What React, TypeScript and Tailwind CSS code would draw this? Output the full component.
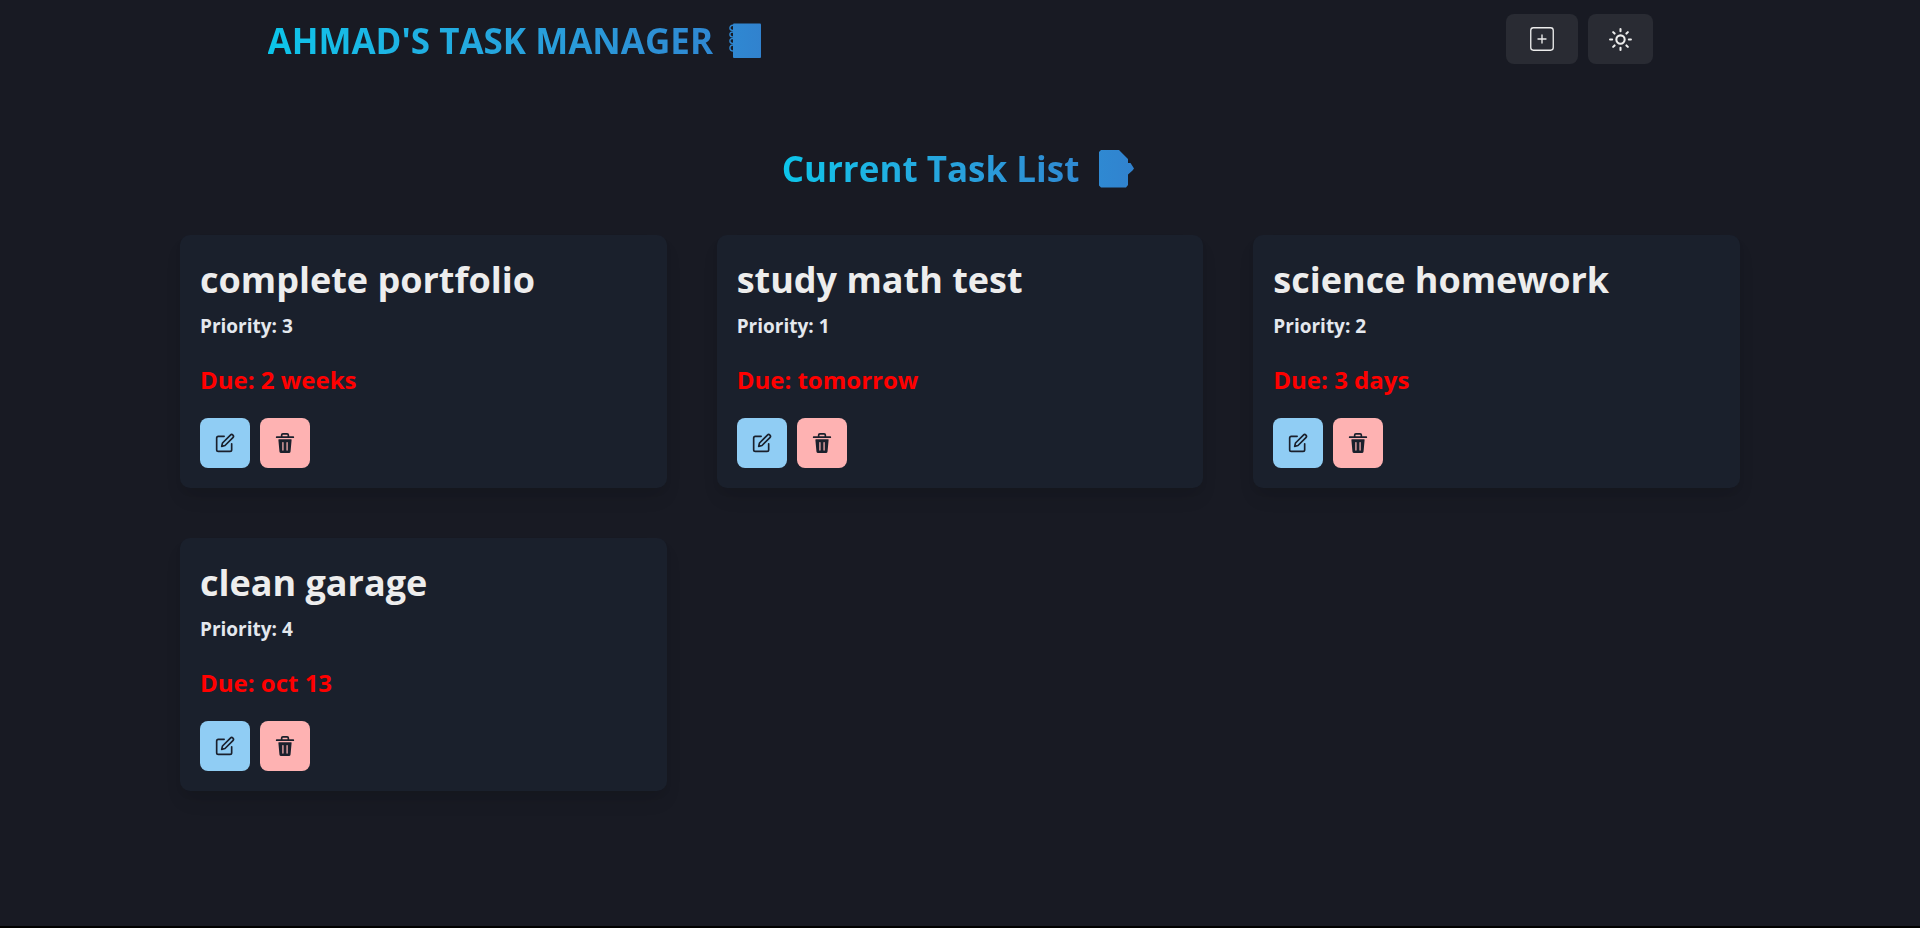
import { useState } from "react";
import { CiSquarePlus } from "react-icons/ci";
import { FiEdit } from "react-icons/fi";
import { LuSun } from "react-icons/lu";

type Task = { id: number; title: string; priority: number; due: string };

const initialTasks: Task[] = [
  { id: 1, title: "complete portfolio", priority: 3, due: "2 weeks" },
  { id: 2, title: "study math test", priority: 1, due: "tomorrow" },
  { id: 3, title: "science homework", priority: 2, due: "3 days" },
  { id: 4, title: "clean garage", priority: 4, due: "oct 13" },
];

function NotebookIcon() {
  return (
    <svg width="33" height="36" viewBox="0 0 33 36" aria-hidden="true">
      <defs>
        <linearGradient id="notebook-fill" x1="0" x2="1">
          <stop offset="0" stopColor="#2f88d2" />
          <stop offset="1" stopColor="#3182ce" />
        </linearGradient>
      </defs>
      <rect x="4" y="0.500" width="28" height="34.500" rx="1" fill="url(#notebook-fill)" />
      <g fill="none" stroke="#2f88d2" strokeWidth="1.400">
        <path d="M4.500 2.300C2 2 .9 3.500.9 5S2 7.500 4.500 7.500" />
        <path d="M4.500 9C2 8.700.9 10 .9 11.500S2 14 4.500 14" />
        <path d="M4.500 15.500C2 15.200.9 16.500.9 18S2 20.500 4.500 20.500" />
        <path d="M4.500 22C2 21.700.9 23.300.9 25S2 28 4.500 28" />
      </g>
    </svg>
  );
}

function MemoIcon() {
  return (
    <svg width="35" height="38" viewBox="0 0 35 38" aria-hidden="true">
      <defs>
        <linearGradient id="memo-fill" x1="0" x2="1">
          <stop offset="0" stopColor="#2f89d2" />
          <stop offset="1" stopColor="#3182ce" />
        </linearGradient>
      </defs>
      <path
        fill="url(#memo-fill)"
        d="M2 0H20L29 9V13H31.500L35 18.500L33.500 20.500L29 24.500V35L27 37.500H2L0 35.500V2Z"
      />
    </svg>
  );
}

function TrashIcon() {
  return (
    <svg width="20" height="20" viewBox="0 0 24 24" fill="currentColor" aria-hidden="true">
      <path d="M19.452 7.5H4.547a.5.5 0 00-.5.545l1.287 14.136A2 2 0 007.326 24h9.347a2 2 0 001.992-1.819L19.95 8.045a.5.5 0 00-.129-.382.5.5 0 00-.369-.163zm-9.2 13a.75.75 0 01-1.5 0v-9a.75.75 0 011.5 0zm5 0a.75.75 0 01-1.5 0v-9a.75.75 0 011.5 0zM22 4h-4.75a.25.25 0 01-.25-.25V2.5A2.5 2.5 0 0014.5 0h-5A2.5 2.5 0 007 2.5v1.25a.25.25 0 01-.25.25H2a1 1 0 000 2h20a1 1 0 000-2zM9 3.75V2.5a.5.5 0 01.5-.5h5a.5.5 0 01.5.5v1.25a.25.25 0 01-.25.25h-5.5A.25.25 0 019 3.75z" />
    </svg>
  );
}

function TaskCard({ task, onDelete }: { task: Task; onDelete: () => void }) {
  return (
    <article className="rounded-[10px] bg-[#1a202c] p-5 shadow-[0_12px_19px_-4px_rgba(0,0,0,0.1),0_5px_8px_-2px_rgba(0,0,0,0.05)]">
      <h2 className="text-4xl leading-[50px] font-bold text-[#ededed]">{task.title}</h2>
      <p className="mt-[6px] text-[19px] leading-[30px] font-bold text-[#e4e8ee]">
        Priority: {task.priority}
      </p>
      <p className="mt-5 text-2xl leading-[38px] font-bold text-[#ff0000]">Due: {task.due}</p>
      <div className="mt-[19px] flex gap-[10px] text-[#1a202c]">
        <button
          type="button"
          aria-label={`Edit ${task.title}`}
          className="flex size-[50px] items-center justify-center rounded-lg bg-[#90cdf4]"
        >
          <FiEdit size={20} />
        </button>
        <button
          type="button"
          aria-label={`Delete ${task.title}`}
          onClick={onDelete}
          className="flex size-[50px] items-center justify-center rounded-lg bg-[#feb2b2]"
        >
          <TrashIcon />
        </button>
      </div>
    </article>
  );
}

export default function App() {
  const [tasks, setTasks] = useState(initialTasks);

  return (
    <div className="min-h-screen border-b-2 border-black bg-[#181a23] font-['Open_Sans','Noto_Sans',sans-serif]">
      <header className="mx-auto flex max-w-[1425px] items-center justify-between px-5 pt-3">
        <h1 className="flex items-center gap-4 pt-1 text-[35px] leading-[50px] font-bold">
          <span className="bg-linear-to-r from-[#0bc5ea] to-[#2f88d2] bg-clip-text text-transparent">
            AHMAD'S TASK MANAGER
          </span>
          <NotebookIcon />
        </h1>
        <div className="flex gap-[10px] text-[#ededed]">
          <button
            type="button"
            aria-label="Add task"
            className="flex h-[50px] items-center justify-center rounded-lg bg-[#292b33] px-5"
          >
            <CiSquarePlus size={32} />
          </button>
          <button
            type="button"
            aria-label="Toggle color mode"
            className="flex h-[50px] items-center justify-center rounded-lg bg-[#292b33] px-5"
          >
            <LuSun size={25} />
          </button>
        </div>
      </header>

      <main className="mx-auto max-w-[1600px] px-5 pt-[78px]">
        <h2 className="flex items-center justify-center gap-5 pr-1 text-[35px] leading-[50px] font-bold">
          <span className="bg-linear-to-r from-[#0bc5ea] to-[#2f89d2] bg-clip-text text-transparent">
            Current Task List
          </span>
          <MemoIcon />
        </h2>
        <div className="mt-[41px] grid grid-cols-1 gap-[50px] md:grid-cols-2 xl:grid-cols-3">
          {tasks.map((task) => (
            <TaskCard
              key={task.id}
              task={task}
              onDelete={() => setTasks(tasks.filter((t) => t.id !== task.id))}
            />
          ))}
        </div>
      </main>
    </div>
  );
}
